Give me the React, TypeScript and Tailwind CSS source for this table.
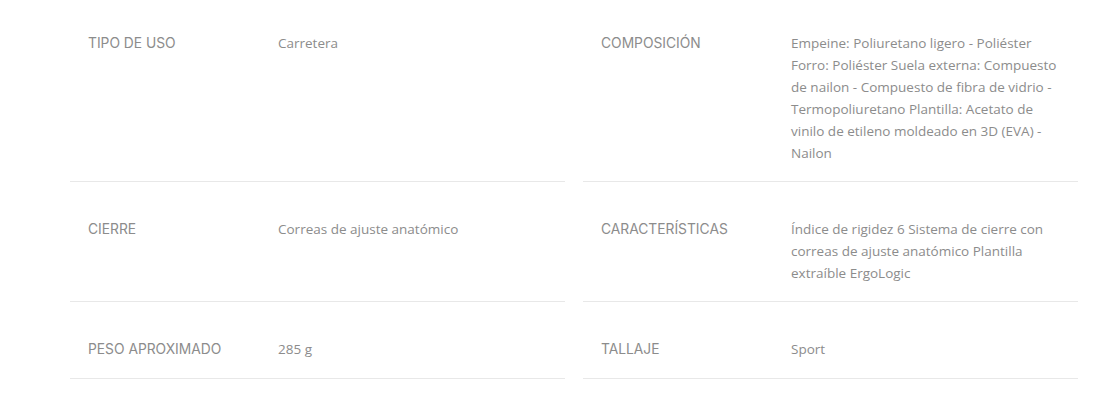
const rows: [string, string][][] = [
  [
    ["TIPO DE USO", "Carretera"],
    [
      "COMPOSICIÓN",
      "Empeine: Poliuretano ligero - Poliéster Forro: Poliéster Suela externa: Compuesto de nailon - Compuesto de fibra de vidrio - Termopoliuretano Plantilla: Acetato de vinilo de etileno moldeado en 3D (EVA) - Nailon",
    ],
  ],
  [
    ["CIERRE", "Correas de ajuste anatómico"],
    [
      "CARACTERÍSTICAS",
      "Índice de rigidez 6 Sistema de cierre con correas de ajuste anatómico Plantilla extraíble ErgoLogic",
    ],
  ],
  [
    ["PESO APROXIMADO", "285 g"],
    ["TALLAJE", "Sport"],
  ],
];

const Cell = ({ label, value, row }: { label: string; value: string; row: number }) => (
  <div
    className={`flex border-b border-[#e8e8e8] pl-[18px] pr-[10px] ${row === 0 ? "pt-[32px]" : "pt-[36px]"} ${row === 2 ? "pb-[18px]" : "pb-[17px]"}`}
  >
    <div className="w-[190px] shrink-0 text-[13.8px] leading-[22px] text-[#8c8c8c] font-['Inter',sans-serif]">
      {label}
    </div>
    <div className="flex-1 text-[13.5px] leading-[22px] text-[#8c8c8c] font-['Open_Sans',sans-serif]">
      {value}
    </div>
  </div>
);

export default function App() {
  return (
    <div className="w-[1116px] h-[410px] bg-white">
      <div className="ml-[70px] w-[1008px] grid grid-cols-2 gap-x-[18px]">
        {rows.map((pair, i) =>
          pair.map(([label, value]) => (
            <Cell key={label} label={label} value={value} row={i} />
          ))
        )}
      </div>
    </div>
  );
}
